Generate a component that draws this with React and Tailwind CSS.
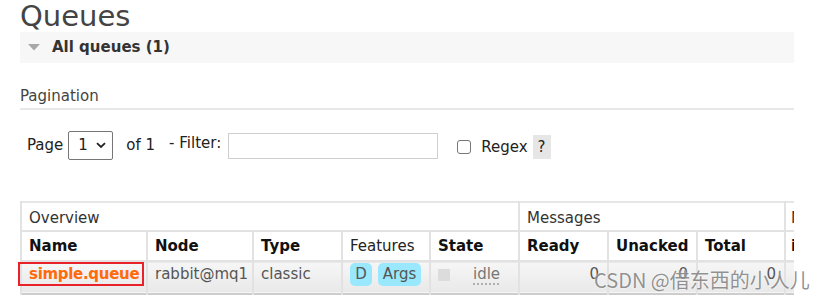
export default function App() {
  return (
    <div className="relative w-[821px] h-[303px] overflow-hidden bg-white font-['DejaVu_Sans',Verdana,sans-serif] text-[#444]">
      <div className="w-[774px] ml-[20px]">
        <h1 className="mt-px text-[29px] leading-[30px] font-normal text-[#444]">Queues</h1>

        <div className="mt-px h-[31px] bg-[#f7f7f7] flex items-center pl-[8px]">
          <svg width="12" height="7" viewBox="0 0 12 7" className="mr-[12px]">
            <path d="M0 0 L12 0 L6 6.5 Z" fill="#a8a8a8" />
          </svg>
          <span className="font-bold text-[15px] text-[#333]">All queues (1)</span>
        </div>

        <div className="mt-[23px] text-[15px] leading-[20px] text-[#444]">Pagination</div>
        <div className="mt-[2px] h-[2px] bg-[#e8e8e8]" />

        <div className="mt-[21px] flex items-center text-[15px] text-[#222]">
          <span className="ml-[7px]">Page</span>
          <div className="ml-[5px] w-[45px] h-[29px] border border-[#767676] rounded-[2px] flex items-center pl-[9px]">
            <span>1</span>
            <svg width="10" height="7" viewBox="0 0 10 7" className="ml-[8px]">
              <path d="M1 1.2 L5 5 L9 1.2" fill="none" stroke="#222" strokeWidth="1.8" />
            </svg>
          </div>
          <span className="ml-[13px]">of 1</span>
          <span className="ml-[14px] -mt-[5px]">- Filter:</span>
          <div className="ml-[7px] w-[210px] h-[26px] border border-[#cfcfcf]" />
          <div className="ml-[19px] w-[14px] h-[14px] border border-[#767676] rounded-[3px] mt-[2px]" />
          <span className="ml-[10px] mt-[3px]">Regex</span>
          <span className="ml-[5px] mt-[3px] w-[18px] h-[24px] bg-[#e6e6e6] flex items-center justify-center">?</span>
        </div>

        <div className="mt-[41px] -ml-[20px] pl-[20px] w-[794px] overflow-hidden">
          <table className="table-fixed border-collapse text-[15px] w-[880px]">
            <colgroup>
              <col className="w-[126px]" />
              <col className="w-[106px]" />
              <col className="w-[89px]" />
              <col className="w-[88px]" />
              <col className="w-[89px]" />
              <col className="w-[89px]" />
              <col className="w-[89px]" />
              <col className="w-[88px]" />
              <col className="w-[126px]" />
            </colgroup>
            <thead>
              <tr className="h-[29px] border-t-2 border-[#e6e6e6]">
                <th colSpan={5} className="text-left font-normal text-[#333] pl-[7px] pt-[3px] border-l-2 border-[#e2e2e2] border-b-2">Overview</th>
                <th colSpan={3} className="text-left font-normal text-[#333] pl-[7px] pt-[3px] border-l-2 border-[#e2e2e2] border-b-2">Messages</th>
                <th className="text-left font-normal text-[#333] pl-[5px] pt-[3px] border-l-2 border-[#e2e2e2] border-b-2 whitespace-nowrap">Message rates</th>
              </tr>
              <tr className="h-[30px]">
                <th className="text-left font-bold text-[#111] pl-[7px] pt-[1px] border-l-2 border-[#e2e2e2]">Name</th>
                <th className="text-left font-bold text-[#111] pl-[7px] pt-[1px] border-l-2 border-[#e2e2e2]">Node</th>
                <th className="text-left font-bold text-[#111] pl-[7px] pt-[1px] border-l-2 border-[#e2e2e2]">Type</th>
                <th className="text-left font-normal text-[#222] pl-[7px] pt-[1px] border-l-2 border-[#e2e2e2]">Features</th>
                <th className="text-left font-bold text-[#111] pl-[7px] pt-[1px] border-l-2 border-[#e2e2e2]">State</th>
                <th className="text-left font-bold text-[#111] pl-[7px] pt-[1px] border-l-2 border-[#e2e2e2]">Ready</th>
                <th className="text-left font-bold text-[#111] pl-[7px] pt-[1px] border-l-2 border-[#e2e2e2]">Unacked</th>
                <th className="text-left font-bold text-[#111] pl-[7px] pt-[1px] border-l-2 border-[#e2e2e2]">Total</th>
                <th className="text-left font-bold text-[#111] pl-[5px] pt-[1px] border-l-2 border-[#e2e2e2]">incoming</th>
              </tr>
            </thead>
            <tbody>
              <tr className="h-[33px] bg-gradient-to-b from-[#f6f6f6] to-[#e9e9e9] border-t-2 border-b-2 border-t-[#e2e2e2] border-b-[#cdcdcd] text-[#555]">
                <td className="pl-[7px] pb-[6px] border-l-2 border-[#e2e2e2]">
                  <span className="relative font-bold tracking-[-0.3px] text-[#ff6a0a]">
                    simple.queue
                    <span className="absolute -left-[11px] -right-[5px] -top-[3px] -bottom-[3px] border-2 border-[#e8212b]" />
                  </span>
                </td>
                <td className="pl-[7px] pb-[6px] border-l-2 border-[#e2e2e2]">rabbit@mq1</td>
                <td className="pl-[7px] pb-[6px] border-l-2 border-[#e2e2e2]">classic</td>
                <td className="pl-[7px] pb-[6px] border-l-2 border-[#e2e2e2]">
                  <div className="flex gap-[6px]">
                    <span className="w-[22px] h-[23px] rounded-[5px] bg-[#9ae8fd] flex items-center justify-center">D</span>
                    <span className="w-[43px] h-[23px] rounded-[5px] bg-[#9ae8fd] flex items-center justify-center">Args</span>
                  </div>
                </td>
                <td className="pl-[7px] pb-[6px] border-l-2 border-[#e2e2e2]">
                  <div className="flex items-center">
                    <span className="w-[12px] h-[12px] bg-[#dcdcdc]" />
                    <span className="ml-[23px] text-[#777] underline decoration-dotted decoration-[#999] underline-offset-[4px]">idle</span>
                  </div>
                </td>
                <td className="pr-[8px] pb-[6px] text-right border-l-2 border-[#e2e2e2]">0</td>
                <td className="pr-[8px] pb-[6px] text-right border-l-2 border-[#e2e2e2]">0</td>
                <td className="pr-[8px] pb-[6px] text-right border-l-2 border-[#e2e2e2]">0</td>
                <td className="border-l-2 border-[#e2e2e2]"></td>
              </tr>
            </tbody>
          </table>
        </div>
      </div>

      <div className="absolute left-[594px] top-[267px] text-[20px] leading-[26px] whitespace-nowrap text-[rgba(110,110,110,0.75)] font-['Noto_Sans_CJK_SC','Noto_Sans',sans-serif] [text-shadow:0_0_2px_#fff]">
        CSDN @借东西的小人儿
      </div>
    </div>
  );
}
